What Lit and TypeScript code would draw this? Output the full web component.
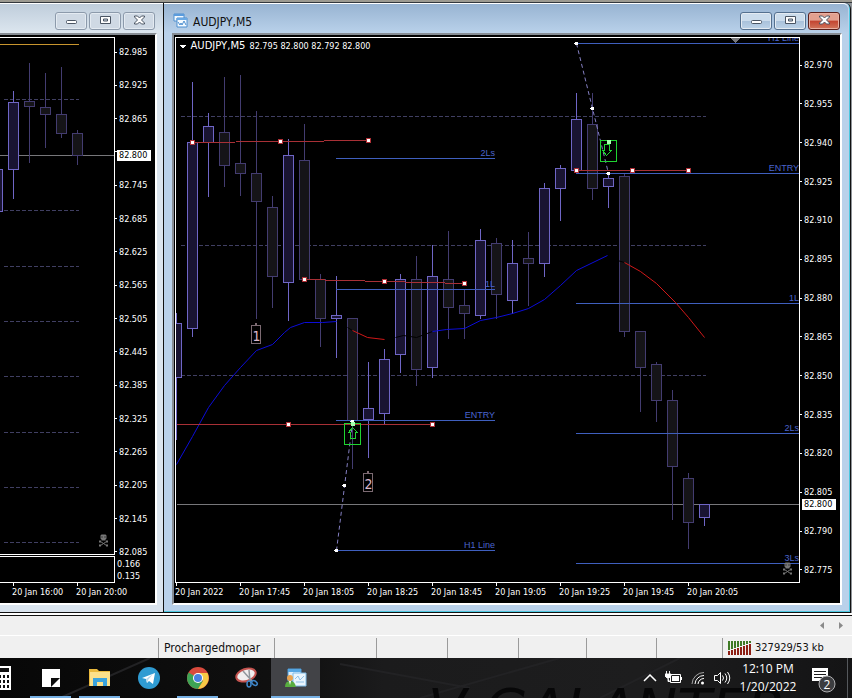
import { LitElement, html, svg, css, nothing } from "lit";
import { customElement, property } from "lit/decorators.js";
import { styleMap } from "lit/directives/style-map.js";
import { classMap } from "lit/directives/class-map.js";

type Candle = [x: number, high: number, top: number, bottom: number, low: number, up: 0 | 1];
type Point = [number, number];

const mainCandles: Candle[] = [
  [176, 313, 323, 377, 439, 1], [192, 82, 142, 328, 336, 1], [208, 113, 126, 142, 196, 1],
  [224, 77, 132, 165, 186, 0], [240, 75, 163, 173, 195, 0], [256, 111, 173, 201, 318, 0],
  [272, 196, 207, 276, 307, 0], [288, 139, 155, 282, 320, 1], [304, 124, 160, 279, 279, 0],
  [320, 274, 279, 318, 346, 0], [336, 276, 315, 318, 357, 1], [352, 318, 318, 420, 468, 0],
  [368, 362, 408, 419, 457, 1], [384, 349, 359, 413, 423, 1], [400, 274, 279, 354, 372, 1],
  [416, 256, 279, 369, 385, 0], [432, 245, 276, 367, 377, 1], [448, 231, 279, 307, 338, 0],
  [464, 290, 305, 313, 338, 0], [480, 229, 240, 315, 318, 1], [496, 238, 243, 294, 318, 0],
  [512, 240, 263, 300, 313, 1], [528, 232, 258, 263, 305, 0], [544, 183, 188, 263, 276, 1],
  [560, 165, 168, 188, 220, 1], [576, 93, 119, 170, 170, 1], [592, 93, 124, 188, 199, 0],
  [608, 172, 178, 186, 207, 1], [624, 173, 176, 331, 336, 0], [640, 331, 331, 367, 411, 0],
  [656, 362, 364, 400, 421, 0], [672, 390, 400, 466, 519, 0], [688, 473, 478, 522, 548, 0],
  [704, 504, 504, 517, 525, 1],
];

const sideCandles: Candle[] = [
  [-3, 169, 169, 211, 211, 1], [13, 91, 102, 169, 198, 1], [29, 63, 101, 106, 162, 0],
  [45, 73, 107, 114, 147, 0], [61, 67, 114, 133, 137, 0], [77, 130, 133, 155, 164, 0],
];

const levels: { x1: number; x2: number; y: number; label: string }[] = [
  { x1: 336, x2: 494, y: 158, label: "2Ls" },
  { x1: 336, x2: 494, y: 289, label: "1L" },
  { x1: 336, x2: 494, y: 420, label: "ENTRY" },
  { x1: 336, x2: 494, y: 550, label: "H1 Line" },
  { x1: 576, x2: 798, y: 43, label: "H1 Line" },
  { x1: 576, x2: 798, y: 173, label: "ENTRY" },
  { x1: 576, x2: 798, y: 303, label: "1L" },
  { x1: 576, x2: 798, y: 433, label: "2Ls" },
  { x1: 576, x2: 798, y: 563, label: "3Ls" },
];

const redLines: { from: Point; to: Point; grips: Point[] }[] = [
  { from: [192, 142], to: [368, 140], grips: [[192, 142], [280, 141], [368, 140]] },
  { from: [304, 279], to: [464, 283], grips: [[304, 279], [384, 281], [464, 283]] },
  { from: [176, 424], to: [432, 424], grips: [[288, 424], [432, 424]] },
  { from: [576, 170], to: [688, 170], grips: [[576, 170], [632, 170], [688, 170]] },
];

const averages: { tone: string; points: string }[] = [
  { tone: "blue", points: "176,464 192,436 208,407 224,385 240,367 256,350 272,344 284,332 290,327 304,322 322,322 336,321" },
  { tone: "black", points: "347,327 352,330" },
  { tone: "red", points: "352,330 367,337 384,339" },
  { tone: "black", points: "395,337 403,335 416,337 432,331" },
  { tone: "blue", points: "432,331 446,329 464,328 480,320 496,317 512,313 528,308 544,299 560,285 576,270 607,255" },
  { tone: "black", points: "617,260 624,262" },
  { tone: "red", points: "624,262 640,271 656,283 675,302 688,317 704,337" },
];

const drawCandle = ([x, high, top, bottom, low, up]: Candle) => svg`
  <g class=${up ? "up" : "down"}>
    <path d="M${x} ${high - 0.5}V${top}M${x} ${bottom}V${low + 0.5}" />
    <rect x=${x - 5} y=${top} width="10" height=${bottom - top} />
  </g>`;

const drawSkull = (x: number, y: number) => svg`
  <g class="skull" transform="translate(${x} ${y})">
    <path class="head" d="M-2-6h4l1 1v3l-1 1v1h-4v-1l-1-1v-3z" />
    <path class="eyes" d="M-2-4h1v1h-1zM1-4h1v1h-1z" />
    <path class="bone" d="M-3 1L3 5M3 1L-3 5" />
    <path class="head" d="M-4.500 0h2v2h-2zM2.500 0h2v2h-2zM-4.500 4h2v2h-2zM2.500 4h2v2h-2z" />
  </g>`;

@customElement("price-axis")
export class PriceAxis extends LitElement {
  @property({ type: Array }) prices: string[] = [];
  @property({ type: Array }) scale: string[] = [];
  @property() current = "";
  @property() covered = "";
  @property({ type: Number }) offset = 0;

  static styles = css`
    :host { position: relative; display: flex; flex-direction: column; color: #fff; }
    .labels { flex: 1; display: flex; flex-direction: column; justify-content: space-between; padding: var(--axis-pad, 0); }
    .label { display: flex; align-items: center; gap: 2px; height: 12px; line-height: 12px; }
    .label::before { content: ""; width: 2px; height: 1px; background: #fff; }
    .scale { padding: 0 2px 1px; line-height: 12px; }
    .tag { position: absolute; left: 2px; width: 34px; box-sizing: border-box; padding-left: 2px; background: #fff; color: #000; line-height: 11px; }
  `;

  render() {
    return html`
      <div class="labels">
        ${this.prices.map((p) => html`<div class="label">${p === this.covered ? nothing : p}</div>`)}
      </div>
      ${this.scale.length
        ? html`<div class="scale">${this.scale.map((s) => html`<div>${s}</div>`)}</div>`
        : nothing}
      <div class="tag" style=${styleMap({ top: `${this.offset}%` })}>${this.current}</div>
    `;
  }
}

@customElement("chart-window")
export class ChartWindow extends LitElement {
  @property() caption = "";
  @property({ type: Boolean, reflect: true }) active = false;

  static styles = css`
    :host { display: flex; flex-direction: column; box-sizing: border-box; background: #dae4ee; border-bottom: 1px solid #111; padding-bottom: 7px; min-width: 0; }
    :host([active]) { background: #b9d1ea; border: 1px solid #111; border-top: 0; border-radius: 0 6px 0 0; box-shadow: inset -1px -1px #4cc8e0; padding-bottom: 7px; }
    header { display: flex; align-items: center; height: 30px; box-sizing: border-box; padding: 4px 8px 0 8px; gap: 3px; border-top: 1px solid #fff; background: linear-gradient(#bfcddb, #dce6ef); }
    :host([active]) header { background: linear-gradient(#98b4d2, #b9d1ea); margin-right: 2px; padding: 4px 8px 0 9px; border-radius: 0 5px 0 0; }
    h2 { flex: 1; margin: 0; padding: 2px 0 0 2px; font: 12px "DejaVu Sans Condensed", "Noto Sans", sans-serif; color: #111; }
    button { width: 32px; height: 18px; padding: 0; display: grid; place-items: center; border: 1px solid #8c9aab; border-radius: 3px; background: #cfd9e4; box-shadow: inset 0 0 0 1px #e4ebf2; }
    .controls { display: flex; gap: 2px; }
    :host([active]) button { border-color: #54708f; background: linear-gradient(#cbdcec 50%, #a9c1da 50%, #bdd3e8); }
    :host([active]) button.close { border-color: #5b1f1b; background: linear-gradient(#e3a08f 45%, #c34430 50%, #d2765c); box-shadow: inset 0 0 0 1px #e9b0a2; }
    .client { display: grid; background: #000; border: solid; border-width: 2px 2px 2px 0; border-color: #868c93 #fff #fff; padding-top: 2px; margin-right: 6px; }
    :host([active]) .client { margin: 0 8px 0 8px; border-left: 2px solid #868c93; padding-left: 1px; }
    .glyph { fill: #fff; stroke: #4a5563; }
    .doc { flex: none; }
  `;

  render() {
    return html`
      <header>
        ${this.caption
          ? html`<svg class="doc" width="15" height="15" viewBox="0 0 15 15" aria-hidden="true">
              <path d="M1 3V1h10v7H1z" fill="#f4faff" stroke="#4d8fd0" />
              <path d="M1 1h10v2H1z" fill="#5a9bdc" />
              <path d="M3 6h2v2" stroke="#7fb2e4" fill="none" />
              <path d="M4 7V5h10v9H4z" fill="#f4faff" stroke="#4d8fd0" />
              <path d="M4 5h10v2H4z" fill="#6aa9e4" />
              <path d="M5 9l2 3 1-2 1 2 2-4 2 4" stroke="#4d8fd0" fill="none" />
            </svg>`
          : nothing}
        <h2>${this.caption}</h2>
        <div class="controls">
          <button aria-label="Minimize">
            <svg width="13" height="12" viewBox="0 0 13 12"><rect class="glyph" x="1.5" y="5.5" width="10" height="3" rx="1" /></svg>
          </button>
          <button aria-label="Maximize">
            <svg width="13" height="12" viewBox="0 0 13 12"><path class="glyph" fill-rule="evenodd" d="M1.500 1.500h10v7h-10zM4.500 4h4v2h-4z" /></svg>
          </button>
          <button class="close" aria-label="Close">
            <svg width="13" height="12" viewBox="0 0 13 12"><path class="glyph" d="M1.500 1h3l2 2 2-2h3v1L8.500 5l3 3v1h-3l-2-2-2 2h-3V8l3-3-3-3z" /></svg>
          </button>
        </div>
      </header>
      <div class="client"><slot></slot></div>
    `;
  }
}

@customElement("app-root")
export class AppRoot extends LitElement {
  static styles = css`
    :host { display: flex; flex-direction: column; min-height: 100vh; background: #f0f0f0; font: 9px "DejaVu Sans Condensed", "Noto Sans", sans-serif; color: #111; }
    .desk { display: grid; grid-template-columns: 163px minmax(0, 1fr); padding-right: 1px; background: #8f9499; border-top: 2px solid #9c9a91; box-shadow: inset 0 1px #33383d; padding-top: 1px; }
    .rule { height: 2px; background: #fff; border-bottom: 1px solid #111; }
    .chart { display: grid; grid-template-columns: minmax(0, 1fr) 40px; }
    .chart > svg { display: block; width: 100%; height: auto; overflow: visible; clip-path: inset(0 0 -4px 0); }
    .main { --axis-pad: 22px 0 7px; }
    .side { --axis-pad: 9px 0 0; }
    .dates { grid-column: 1 / -1; display: grid; margin-right: 40px; height: 20px; color: #fff; line-height: 18px; white-space: nowrap; }
    .dates span { min-width: 0; }
    .main .dates { grid-template-columns: repeat(9, 64fr) 49fr; }
    .side .dates { grid-template-columns: 12fr 64fr 39fr; }
    .side .dates span:first-child { grid-column: 2; }

    .plot { shape-rendering: crispEdges; fill: none; }
    .frame { stroke: #fff; }
    .grid { stroke: #403f62; stroke-dasharray: 4 2; }
    .price { stroke: #77777a; }
    .up { stroke: #6f66c6; fill: #191432; }
    .down { stroke: #433c70; fill: #151418; }
    .level { fill: #3f5fbe; }
    .tip { fill: #4a64cc; text-anchor: end; font-family: "Liberation Sans", sans-serif; }
    .red { stroke: #a83036; }
    .grip { fill: #fff; stroke: #b03036; }
    .avg { shape-rendering: auto; }
    .avg.blue { stroke: #0c0cd8; }
    .avg.red { stroke: #d01818; }
    .avg.black { stroke: #000; }
    .path { stroke: #8580c4; stroke-dasharray: 4 3; shape-rendering: auto; }
    .dot { fill: #fff; }
    .signal { stroke: #1fd431; }
    .signal .dot { fill: #a8ffb0; stroke: none; }
    .mark rect { stroke: #7c6a72; }
    .mark text { fill: #dcb8cc; font-size: 14px; text-anchor: middle; }
    .gold { stroke: #c8952e; }
    .skull { shape-rendering: auto; }
    .skull .head { fill: #777; }
    .skull .eyes { fill: #000; }
    .skull .bone { stroke: #777; }
    .caption { fill: #fff; }
    .symbol { font: 10px "DejaVu Sans", sans-serif; }

    .tabs { display: flex; justify-content: flex-end; height: 19px; border-bottom: 1px solid #fff; padding-right: 6px; gap: 9px; }
    .tabs button { border: 0; padding: 0; background: none; width: 10px; color: #8a8a8a; display: grid; place-items: center; }
    .status { display: grid; grid-template-columns: minmax(0, 1fr) 116px 102px 71px 71px 68px 70px 66px 130px; height: 22px; padding-top: 2px; box-sizing: border-box; font-size: 12px; line-height: 20px; }
    .status div { display: flex; align-items: center; gap: 3px; padding-left: 5px; border-left: 1px solid #9b9b9b; white-space: nowrap; }
    .status div:first-child { border: 0; }
    .status .traffic { font-size: 11px; }

    .task { position: relative; flex: 1; min-height: 40px; display: flex; background: linear-gradient(90deg, #070707, #101010 35%, #1b1b1c 45%, #1d1d1e 75%, #141415); overflow: hidden; color: #fff; }
    .paper { position: absolute; inset: 0; width: 100%; height: 100%; }
    .paper text { font: oblique 56px "DejaVu Sans", sans-serif; fill: #070708; }
    .app { position: relative; width: 49px; height: 40px; border: 0; padding: 0; background: none; display: grid; place-items: center; }
    .app.first { width: 26px; overflow: hidden; justify-items: start; }
    .app.open::after { content: ""; position: absolute; left: 4px; right: 4px; bottom: 0; height: 2px; background: #76b0e4; }
    .app.active { background: #424347; }
    .app.active::after { left: 0; right: 0; }
    .tray { position: relative; margin-left: auto; display: flex; align-items: center; height: 40px; }
    .tray button { border: 0; background: none; padding: 0; color: #fff; display: grid; place-items: center; height: 40px; }
    .small { width: 24px; }
    .clock { width: 68px; font: 12px/18px "Open Sans", "Noto Sans", sans-serif; text-align: center; }
    .tray .note { width: 46px; border-right: 1px solid #55585c; margin-right: 4px; }
    .count { font: 12px "Open Sans", sans-serif; }
  `;

  private sidePlot() {
    return svg`
      <g class="plot">
        ${[99, 210, 266, 321, 376, 432, 487, 542].map((y) => svg`<path class="grid" d="M3 ${y}H78" />`)}
        <path class="gold" d="M-1 44H78" />
        <path class="price" d="M-1 155H114" />
        ${sideCandles.map(drawCandle)}
        ${drawSkull(103, 540)}
        <path class="frame" d="M-1 37H114V554H-1M-1 556H114V582H-1M13 582V585M77 582V585" />
      </g>`;
  }

  private mainPlot() {
    return svg`
      <g class="plot">
        ${[116, 245, 375].map((y) => svg`<path class="grid" d="M180 ${y}H705" />`)}
        <path class="price" d="M176 504H799" />
        ${mainCandles.map(drawCandle)}
        ${levels.map((l) => svg`
          <rect class="level" x=${l.x1 - 0.5} y=${l.y - 0.5} width=${l.x2 - l.x1 + 1} height="1" />
          <text class="tip" x=${l.x2 + 0.5} y=${l.y - 2.5}>${l.label}</text>`)}
        ${averages.map((a) => svg`<polyline class="avg ${a.tone}" points=${a.points} />`)}
        <path class="path" d="M336 550L352 422M576 43L608 173" />
        ${redLines.map((r) => svg`
          <path class="red" d="M${r.from[0]} ${r.from[1]}L${r.to[0]} ${r.to[1]}" />
          ${r.grips.map(([x, y]) => svg`<rect class="grip" x=${x - 2} y=${y - 2} width="4" height="4" />`)}`)}
        ${[[336, 550], [344, 485], [352, 421], [576, 43], [592, 108], [608, 173]].map(
          ([x, y]) => svg`<circle class="dot" cx=${x} cy=${y} r="2" />`,
        )}
        <g class="signal">
          <rect x="600" y="140" width="16" height="21" />
          <path d="M604 144V150H602L606 155L611 150H609V144Z" />
          <rect class="dot" x="606" y="139" width="4" height="4" />
        </g>
        <g class="signal">
          <rect x="344" y="423" width="16" height="21" />
          <path d="M350 438V432H348L352 427L357 432H355V438Z" />
          <rect class="dot" x="350" y="421" width="4" height="4" />
        </g>
        <g class="mark">
          <rect x="251" y="325" width="9" height="18" /><text x="256" y="340">1</text>
          <rect class="dot" x="255" y="323" width="1" height="1" />
          <rect x="363" y="473" width="9" height="18" /><text x="368" y="488">2</text>
          <rect class="dot" x="367" y="471" width="1" height="1" />
        </g>
        ${drawSkull(787, 568)}
        <path d="M730 37H740L735 43Z" fill="#77777a" />
        <path d="M178 44H186L182 48Z" fill="#fff" />
        <text class="caption symbol" x="190" y="48.500">AUDJPY,M5</text>
        <text class="caption" x="249" y="48.500">82.795 82.800 82.792 82.800</text>
        <path class="frame" d="M799 582V37H175V582H799" />
        ${Array.from({ length: 9 }, (_, i) => svg`<path class="frame" d="M${176 + 64 * i} 582V585" />`)}
      </g>`;
  }

  render() {
    const steps = (from: number, step: number, n: number) =>
      Array.from({ length: n }, (_, i) => (from - i * step).toFixed(3));
    const dates = ["20 Jan 2022", "20 Jan 17:45", "20 Jan 18:05", "20 Jan 18:25", "20 Jan 18:45", "20 Jan 19:05", "20 Jan 19:25", "20 Jan 19:45", "20 Jan 20:05"];
    return html`
      <main class="desk">
        <chart-window>
          <div class="chart side">
            <svg viewBox="-0.5 36.5 115 546" role="img" aria-label="Price chart">${this.sidePlot()}</svg>
            <price-axis .prices=${steps(82.985, 0.06, 16)} .scale=${["0.166", "0.135"]} current="82.800" covered="82.805" .offset=${20.700}></price-axis>
            <div class="dates"><span>20 Jan 16:00</span><span>20 Jan 20:00</span></div>
          </div>
        </chart-window>
        <chart-window active caption="AUDJPY,M5">
          <div class="chart main">
            <svg viewBox="174.500 36.500 625 546" role="img" aria-label="AUDJPY five minute chart">${this.mainPlot()}</svg>
            <price-axis .prices=${steps(82.97, 0.015, 14)} current="82.800" .offset=${84.600}></price-axis>
            <div class="dates">${dates.map((d) => html`<span>${d}</span>`)}</div>
          </div>
        </chart-window>
      </main>
      <div class="rule"></div>
      <nav class="tabs">
        <button aria-label="Scroll left"><svg width="4" height="7"><path d="M4 0v7L0 3.500z" fill="currentColor" /></svg></button>
        <button aria-label="Scroll right"><svg width="4" height="7"><path d="M0 0v7l4-3.500z" fill="currentColor" /></svg></button>
      </nav>
      <div class="status">
        <div></div>
        <div>Prochargedmopar</div>
        ${[0, 1, 2, 3, 4, 5].map(() => html`<div></div>`)}
        <div class="traffic">
          <svg width="24" height="14" viewBox="0 0 24 14" aria-hidden="true">
            ${[0, 1, 2, 3, 4, 5, 6, 7].map((i) => svg`
              <rect x=${i * 3} y="0" width="2" height=${9 - i} fill="#3f7a26" />
              <rect x=${i * 3} y=${10 - i} width="2" height=${4 + i} fill="#8e1f14" />`)}
          </svg>
          327929/53 kb
        </div>
      </div>
      <footer class="task">
        <svg class="paper" viewBox="0 0 852 40" preserveAspectRatio="xMaxYMax slice" aria-hidden="true">
          <path d="M340 6L470 30M600 40L680 0M420 40L560 0M150 0L60 40" stroke="#222224" stroke-width="2" />
          <text x="428" y="70">V GALANTER</text>
        </svg>
        ${this.apps()}
        <div class="tray">
          <button class="small" aria-label="Show hidden icons">
            <svg width="14" height="8" viewBox="0 0 14 8" fill="none" stroke="#fff" stroke-width="1.500"><path d="M1 7l6-6 6 6" /></svg>
          </button>
          <button class="small" aria-label="Battery">
            <svg width="18" height="14" viewBox="0 0 18 14" fill="none" stroke="#fff"><path d="M5.500 3.500h10v8h-10zM16.500 6v3" /><path d="M7 5h7v5H7z" fill="#fff" stroke="none" /><path d="M1.500 0v3M4.500 0v3M0 3h6v2L4 7H2L0 5zM3 7v3.500h2" fill="#fff" stroke-opacity=".9" /></svg>
          </button>
          <button class="small" aria-label="Wi-Fi">
            <svg width="14" height="14" viewBox="0 0 14 14" fill="none" stroke="#fff"><path d="M1 13A12 12 0 0 1 13 1.500" stroke-opacity=".6" /><path d="M4 13A9 9 0 0 1 13 4.500M7 13A6 6 0 0 1 13 7.500" /><circle cx="11.500" cy="12" r="1.500" fill="#fff" stroke="none" /></svg>
          </button>
          <button class="small" aria-label="Volume">
            <svg width="18" height="14" viewBox="0 0 18 14" fill="none" stroke="#fff"><path d="M1.500 4.500h3l3-3v11l-3-3h-3zM9.500 4.500q2 2.500 0 5M12 2.500q3.500 4.500 0 9M14.500 1q4.500 6 0 12" /></svg>
          </button>
          <button class="clock"><span>12:10 PM<br />1/20/2022</span></button>
          <button class="note" aria-label="Notifications">
            <svg width="30" height="30" viewBox="0 0 30 30">
              <path d="M2 5h16v13h-5v4l-4-4H2z" fill="#fff" />
              <path d="M4 8.500h12M4 11.500h12M4 14.500h8" stroke="#1b1b1c" />
              <circle cx="17" cy="21" r="8" fill="#3c3d40" stroke="#b0b0b2" />
              <text class="count" x="17" y="25.500" text-anchor="middle" fill="#fff">2</text>
            </svg>
          </button>
        </div>
      </footer>
    `;
  }

  private apps() {
    const app = (name: string, icon: unknown, state: Record<string, boolean> = {}) =>
      html`<button class=${classMap({ app: true, ...state })} aria-label=${name}>${icon}</button>`;
    return html`
      ${app("Calculator", html`<svg width="11" height="24" viewBox="0 0 11 24"><path d="M0 0h11v24H0z" fill="#fff" /><path d="M0 2h9v4H0z" fill="#111" /><path d="M0 9h1v3H0zM3 9h2v3H3zM7 9h2v3H7zM0 14h1v3H0zM3 14h2v3H3zM7 14h2v3H7zM0 19h1v3H0zM3 19h2v3H3zM7 19h2v3H7z" fill="#111" /></svg>`, { first: true })}
      ${app("Sticky Notes", html`<svg width="18" height="18" viewBox="0 0 18 18"><path d="M0 0h18v18H0z" fill="#fff" /><path d="M18 9h-9v9z" fill="#0d0d0d" /></svg>`, { open: true })}
      ${app("File Explorer", html`<svg width="22" height="20" viewBox="0 0 22 20"><path d="M0 1h8l2 2h11v15H0z" fill="#e9b93d" /><path d="M1 4h20v14H1z" fill="#fbe08a" /><path d="M4 18v-8h14v8h-4v-4H8v4z" fill="#3ba3dc" /></svg>`, { open: true })}
      ${app("Telegram", html`<svg width="22" height="22" viewBox="0 0 22 22"><circle cx="11" cy="11" r="11" fill="#2f9bd2" /><path d="M4 11l13-5-2 11-4-3-2 2-1-4z" fill="#fff" /><path d="M8 12l7-5-5 6-1 3z" fill="#b9d9ec" /></svg>`)}
      ${app("Chrome", html`<svg width="22" height="22" viewBox="0 0 22 22"><circle cx="11" cy="11" r="11" fill="#d94a3d" /><path d="M11 11L1.500 5.500A11 11 0 0 0 11 22l5-8z" fill="#3da355" /><path d="M11 22A11 11 0 0 0 20.500 6H11l5 8z" fill="#f6c945" /><circle cx="11" cy="11" r="5" fill="#fff" /><circle cx="11" cy="11" r="4" fill="#4a80e0" /></svg>`, { open: true })}
      ${app("Snipping Tool", html`<svg width="24" height="22" viewBox="0 0 24 22" fill="none"><ellipse cx="11" cy="8" rx="10" ry="6" transform="rotate(-18 11 8)" fill="#f0eeee" stroke="#c4534f" stroke-width="2" /><path d="M8 4l9 10M14 3l1 11" stroke="#90969c" stroke-width="1.500" /><ellipse cx="14" cy="17" rx="2" ry="3" stroke="#3f86c9" stroke-width="1.500" /><ellipse cx="19.500" cy="16" rx="3" ry="2" transform="rotate(35 19.500 16)" stroke="#3f86c9" stroke-width="1.500" /></svg>`)}
      ${app("MetaTrader", html`<svg width="22" height="20" viewBox="0 0 22 20"><path d="M3 1h13v12H3z" fill="#dceefb" stroke="#4a9ad8" /><path d="M3 1h13v3H3z" fill="#56a6e2" /><path d="M8 5h13v13H8z" fill="#eaf5fd" stroke="#7fbbe6" /><path d="M10 11l3-3 2 4 4-4M11 14h8" stroke="#8fc0e6" fill="none" /><circle cx="5" cy="10" r="3" fill="#e9a24e" /><path d="M0 19q0-6 5-6t6 6z" fill="#58ad3f" /><path d="M4 13h2l-1 4z" fill="#fff" /></svg>`, { open: true, active: true })}
    `;
  }
}
